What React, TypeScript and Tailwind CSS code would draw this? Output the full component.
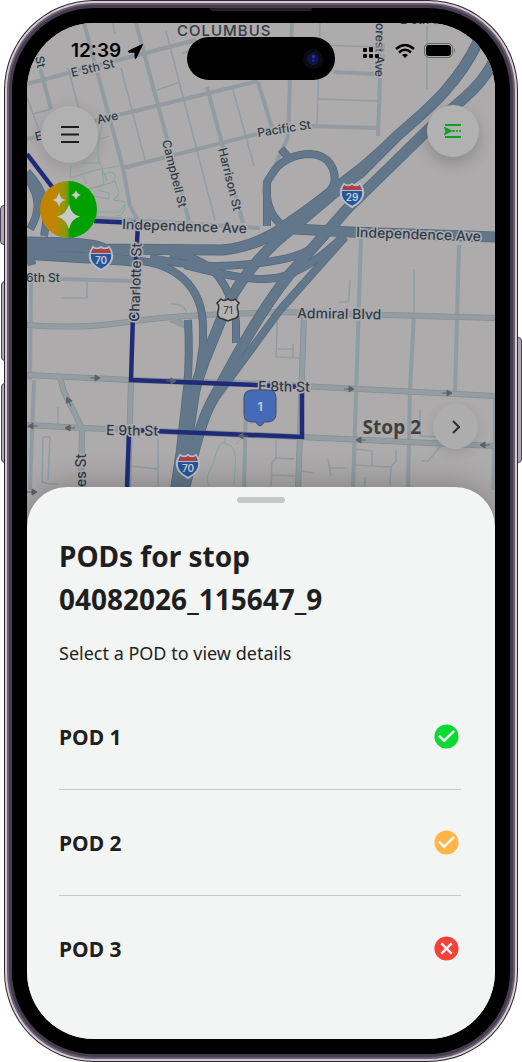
import type { ReactNode } from 'react'
import { MdCancel, MdCheckCircle } from 'react-icons/md'

const pods = [
  { name: 'POD 1', status: 'Delivered', Icon: MdCheckCircle, color: 'text-[#0bd934]' },
  { name: 'POD 2', status: 'Pending', Icon: MdCheckCircle, color: 'text-[#ffb547]' },
  { name: 'POD 3', status: 'Failed', Icon: MdCancel, color: 'text-[#f44336]' },
]

const alleys = [
  // north west blocks
  'M27 97 L33 114 L40 133', 'M33 114 L51 109', 'M68 68 L79 109', 'M113 23 L115 34', 'M121 68 L145 160', 'M166 31 L215 220',
  'M157 90 L178 83', 'M182 53 L193 50', 'M232 86 L254 166', 'M427 23 V89',
  'M320 23 L317 126', 'M318 45 L378 47', 'M318 99 L377 101', 'M190 23 L191 28',
  // east side
  'M339 302 H346 Q349 302 349 298 L350 280', 'M414 269 V315',
  'M277 319 V330 L276 357 L299 358', 'M278 349 H293 M293 344 V357',
  'M420 410 V436 L441 437', 'M440 447 L428 461 H421', 'M328 459 L331 476 M330 468 H346',
  'M354 449 L372 451 V465 M354 465 L391 467 L396 461 V450 M391 466 L390 485 M365 477 V488',
  'M276 440 V458 L272 463 L271 486 M275 458 L295 459 M272 475 L295 476 M301 471 L314 473',
  // west side
  'M61 298 H87 V282', 'M58 407 V424', 'M50 437 H43 L42 482 L50 484 H58 M50 437 L48 480', 'M131 466 L157 469 M158 435 V487', 'M171 304 Q186 304 186 313',
]

const streets = [
  'M27 84 L68 73 L196 40', 'M27 139 L118 115 L160 105 L258 81', 'M123 168 L257 134',
  'M36 52 L51 109', 'M84 23 L123 168 L130 206 L137 219', 'M136 23 L189 221', 'M207 87 L243 223', 'M258 82 L272 128',
  'M292 23 L288 137 L272 172', 'M310 126 L378 128', 'M379 23 V60', 'M380 78 L378 136', 'M333 72 L376 74',
  'M60 279 L133 281', 'M96 218 L130 220 L260 228', 'M31 280 L30 380', 'M34 380 L30 490',
  'M361 238 L353 490', 'M459 245 L455 394', 'M414 314 L410 390 L408 490', 'M495 395 V434 L493 490', 'M246 405 L244 490',
]

const avenues = [
  'M27 325 Q80 329 120 323 T205 315 L280 312 L496 318', 'M27 375 L131 380 L263 384 L496 396', 'M27 425 L82 428 L133 430 L300 437 L496 446',
  'M131 380 L128 490', 'M60 377 L64 392 L82 428 L81 490', 'M304 316 L298 490', 'M171 319 L187 326',
]

const ramps = [
  'M27 178 C42 198 39 214 30 229', 'M27 172 C44 190 50 209 44 236',
  'M281 149 L288 157', 'M267 226 V182 L272 174 C279 162 293 154 311 154 C329 155 337 170 334 184 C328 200 300 216 284 227',
  'M267 182 Q264 214 285 227', 'M27 248 L132 249 H220 C250 249 268 240 277 232 L362 166 L396 136',
  'M125 260 C175 260 204 286 203 330 V345 L182 487', 'M150 258 C190 266 220 269 267 262 S311 246 326 236',
  'M170 254 C195 255 211 267 218 276 S233 298 236 322 V343', 'M185 265 C236 278 267 284 290 274 S325 253 343 237',
  'M188 320 Q190 356 187 388 L180 450 L174 490', 'M345 237 L280 310 L211 404', 'M35 260 L27 262',
]

const mainlines = [
  'M27 242 C70 243 96 243 104 249 L222 250 Q249 248 276 232 L360 173 L396 137 C420 115 455 90 478 42',
  'M27 254 C60 257 105 258 134 261', 'M496 237 L350 232 L276 228', 'M494 60 C482 86 462 100 436 122 L347 209 L289 275 C257 315 228 371 211 403 C200 423 192 460 184 490',
  'M370 163 L277 241 Q240 275 223 315 L204 362 Q190 400 186 430 L176 490',
]

const parkPaths =
  'M102 124 C100 140 94 152 102 168 L107 181 M99 139 L110 136 M82 163 H99 L98 158 M71 166 L70 178 L96 170 L119 166 M72 180 L76 192 L98 187 L116 181 M84 176 L86 184 M102 170 L104 184 L83 191 M105 174 C113 170 117 174 114 180 L118 189 Q121 196 113 200 L126 202 M98 190 L109 193 V199 L93 196 M96 212 H120 L125 204 Q125 216 116 216 M225 438 V444 C238 445 235 460 235 471 L234 485 M225 441 C215 446 216 459 212 466 Q204 479 209 486 M235 445 L243 437'

const routes = ['M27 154 L53 188', 'M94 221 L135 223 L138 224 L133 315 L131 380 L302 387 V437 L129 430 L127 490']

function Label({ x, y, size = 12, turn = 0, children }: { x: number; y: number; size?: number; turn?: number; children: ReactNode }) {
  return (
    <text
      x={x}
      y={y}
      fontSize={size}
      transform={`rotate(${turn} ${x} ${y})`}
      className="fill-[#2e3b4b] stroke-[#adabac] font-medium"
      strokeWidth="3"
      paintOrder="stroke"
    >
      {children}
    </text>
  )
}

function Interstate({ x, y, num }: { x: number; y: number; num: string }) {
  return (
    <g transform={`translate(${x} ${y})`}>
      <path d="M-8 -11 Q-4 -8 0 -11 Q4 -8 8 -11 Q14 -3 9 5 Q6 9 0 12 Q-6 9 -9 5 Q-14 -3 -8 -11Z" fill="#24579c" stroke="#b9bcc3" strokeWidth="2" />
      <path d="M-9 -5 L-8 -10 Q-4 -7 0 -10 Q4 -7 8 -10 L9 -5Z" fill="#b23f40" />
      <path d="M-10 -4.500H10" stroke="#b9bcc3" />
      <text y="6" fontSize="10" textAnchor="middle" className="fill-[#c8ccd2] font-semibold">{num}</text>
    </g>
  )
}

function Arrow({ x, y, turn = 0 }: { x: number; y: number; turn?: number }) {
  return <path d="M-5 0H1M0 -3L5 0L0 3Z" transform={`translate(${x} ${y}) rotate(${turn})`} fill="#596269" stroke="#596269" />
}

function StreetMap() {
  return (
    <svg
      viewBox="27 23 468 500"
      preserveAspectRatio="xMidYMin slice"
      className="absolute inset-0 size-full bg-[#adabac] font-['Inter',sans-serif]"
      role="img"
      aria-label="Route map"
    >
      <g fill="none" strokeLinejoin="round">
        <g stroke="#929ca2" strokeWidth="1.500">{alleys.map((d) => <path key={d} d={d} />)}</g>
        <path d={parkPaths} stroke="#83a898" />
        <g stroke="#929b9f" strokeWidth="4">{streets.map((d) => <path key={d} d={d} />)}</g>
        <g stroke="#858f95" strokeWidth="6">{avenues.map((d) => <path key={d} d={d} />)}</g>
        <g stroke="#949da1" strokeWidth="4.500">{avenues.map((d) => <path key={d} d={d} />)}</g>
        <g stroke="#536980" strokeWidth="8">{ramps.map((d) => <path key={d} d={d} />)}</g>
        <g stroke="#536980" strokeWidth="11">{mainlines.map((d) => <path key={d} d={d} />)}</g>
        <g stroke="#63778b" strokeWidth="6.500">{ramps.map((d) => <path key={d} d={d} />)}</g>
        <g stroke="#63778b" strokeWidth="9.500">{mainlines.map((d) => <path key={d} d={d} />)}</g>
        <g stroke="#202b78" strokeWidth="4.500" strokeLinejoin="miter">{routes.map((d) => <path key={d} d={d} />)}</g>
      </g>

      <Arrow x={95} y={378} />
      <Arrow x={171} y={381} />
      <Arrow x={349} y={389} />
      <Arrow x={447} y={393} />
      <Arrow x={69} y={402} turn={-115} />
      <Arrow x={33} y={426} turn={180} />
      <Arrow x={70} y={428} turn={180} />
      <Arrow x={243} y={436} turn={180} />
      <Arrow x={361} y={440} turn={180} />
      <Arrow x={485} y={445} turn={180} />
      <Arrow x={32} y={492} />

      <text x="177" y="36" fontSize="15" letterSpacing="1" className="fill-[#333b43] font-medium">COLUMBUS</text>
      <Label x={35} y={57} turn={78}>St</Label>
      <Label x={72} y={77} turn={-13}>E 5th St</Label>
      <Label x={36} y={141} turn={-13}>E</Label>
      <Label x={98} y={124} turn={-13}>Ave</Label>
      <Label x={400} y={24}>E 5th St</Label>
      <Label x={376} y={23} turn={91}>orest Ave</Label>
      <Label x={258} y={137} turn={-9}>Pacific St</Label>
      <Label x={162} y={141} turn={76}>Campbell St</Label>
      <Label x={218} y={149} turn={76}>Harrison St</Label>
      <Label x={122} y={229} size={14} turn={2}>Independence Ave</Label>
      <Label x={356} y={237} size={14} turn={2}>Independence Ave</Label>
      <Label x={139} y={322} size={14} turn={-88}>Charlotte St</Label>
      <Label x={26} y={282}>6th St</Label>
      <Label x={297} y={318} size={14} turn={1}>Admiral Blvd</Label>
      <Label x={258} y={391} size={14} turn={1}>E 8th St</Label>
      <Label x={106} y={435} size={14} turn={1}>E 9th St</Label>
      <Label x={86} y={487} size={14} turn={-90}>es St</Label>

      <Interstate x={352} y={195} num="29" />
      <Interstate x={101} y={258} num="70" />
      <Interstate x={188} y={466} num="70" />
      <g transform="translate(228 310)">
        <path d="M-7 -11 Q-4 -8 0 -11 Q4 -8 7 -11 L11 -7 Q8 -4 10 1 Q12 8 5 9 L0 11 L-5 9 Q-12 8 -10 1 Q-8 -4 -11 -7Z" fill="#b4b2b2" stroke="#333" strokeWidth="1.500" />
        <text y="4" fontSize="10" textAnchor="middle" className="fill-[#333]">71</text>
      </g>

      <path d="M252 390H268Q276 390 276 398V414Q276 421 268 422L264 422Q263 425 260 426Q257 425 256 422H252Q244 422 244 414V398Q244 390 252 390Z" fill="#446ab8" stroke="#45505e" />
      <text x="260" y="411" fontSize="12" textAnchor="middle" className="fill-[#b8c4da] font-bold">1</text>
    </svg>
  )
}

function StatusBar() {
  return (
    <div className="absolute inset-x-0 top-0 flex h-14 items-center justify-between pl-11 pr-[39px] text-black">
      <div className="flex items-center gap-[6px]">
        <span className="font-['Inter',sans-serif] text-[19px] font-semibold leading-6">12:39</span>
        <svg viewBox="0 0 17 17" className="size-[17px]" aria-hidden="true">
          <path d="M15.500 1.500 L1.500 8 Q1 9 2 9.200 H8 V15.200 Q8.400 16 9 15.200Z" fill="currentColor" stroke="currentColor" strokeLinejoin="round" />
        </svg>
      </div>
      <div className="flex items-center gap-[9px]">
        <svg viewBox="0 0 24 18" className="h-[18px] w-6" aria-hidden="true">
          <path d="M13 1h4v9h-4zM19 1h4v9h-4zM19 12h4v4h-4z" fill="#9a9999" opacity="0.6" />
          <g fill="currentColor">
            <rect x="1" y="6" width="4" height="4" rx="1" />
            <rect x="7" y="5" width="4" height="5" rx="1" />
            <rect x="1" y="12" width="4" height="4" rx="1" />
            <rect x="7" y="12" width="4" height="4" rx="1" />
            <rect x="13" y="12" width="4" height="4" rx="1" />
          </g>
        </svg>
        <svg viewBox="0 0 20 15" className="h-[15px] w-5" fill="none" stroke="currentColor" aria-hidden="true">
          <path d="M1 5Q10 -3 19 5M4 8.500Q10 3 16 8.500" strokeWidth="2.500" />
          <path d="M7 11Q10 8.500 13 11L10 14Z" fill="currentColor" stroke="none" />
        </svg>
        <svg viewBox="0 0 32 16" className="h-4 w-8" aria-hidden="true">
          <rect x="0.500" y="0.500" width="28" height="14" rx="4.500" fill="none" stroke="#666" />
          <rect x="2" y="2" width="25" height="11" rx="3" />
          <path d="M30 5Q32 7.500 30 10Z" fill="#666" />
        </svg>
      </div>
    </div>
  )
}

function DynamicIsland() {
  return (
    <div className="absolute left-1/2 top-[14px] flex h-[43px] w-[148px] -translate-x-1/2 items-center justify-end rounded-full bg-black pr-3">
      <span className="flex size-5 items-center justify-center rounded-full bg-[#0c0a14]">
        <span className="flex size-3 flex-col items-center justify-center gap-px rounded-full bg-[#14144a]">
          <span className="size-[3px] rounded-full bg-[#2b3dae]" />
          <span className="size-[3px] rounded-full bg-[#1c2a86]" />
        </span>
      </span>
    </div>
  )
}

export default function App() {
  return (
    <main className="relative mx-auto flex min-h-screen max-w-[522px] bg-white px-1 font-['Noto_Sans',sans-serif] text-[#1f1f1f]">
      {/* side buttons */}
      <span className="absolute left-0 top-[205px] h-10 w-2 rounded-l-sm border border-[#4a4355] bg-[#b0a8b6]" />
      <span className="absolute left-px top-[281px] h-20 w-2 rounded-l-sm border border-[#4a4355] bg-[#b0a8b6]" />
      <span className="absolute left-px top-[383px] h-20 w-2 rounded-l-sm border border-[#4a4355] bg-[#b0a8b6]" />
      <span className="absolute right-0 top-[337px] h-[126px] w-2 rounded-r-sm border border-[#4a4355] bg-[#b0a8b6]" />

      <div className="relative flex w-full rounded-[90px] bg-[#2c2634] p-px">
        <div className="flex w-full rounded-[89px] bg-[#d6cdd0] p-[2px]">
          <div className="flex w-full rounded-[87px] border-2 border-[#675b70] bg-[#453c4e] p-[3px]">
            <div className="relative flex w-full rounded-[82px] bg-black p-[15px]">
              <span className="absolute left-1/2 top-0 h-[3px] w-[102px] -translate-x-1/2 rounded-b bg-[#222]" />
              <div className="flex w-full flex-col overflow-hidden rounded-[67px] bg-[#adabac]">
                <section className="relative h-[500px]">
                  <StreetMap />
                  <StatusBar />
                  <DynamicIsland />

                  <button
                    aria-label="Menu"
                    className="absolute left-[14px] top-[83px] flex size-[57px] items-center justify-center rounded-full bg-[#b1b1b1] shadow-[0_4px_16px_rgba(0,0,0,0.15)]"
                  >
                    <svg viewBox="0 0 18 17" className="h-[17px] w-[18px]" stroke="#1c1c1c" strokeWidth="2" aria-hidden="true">
                      <path d="M0 1H18M0 8.500H18M0 16H18" />
                    </svg>
                  </button>

                  <button
                    aria-label="Route list"
                    className="absolute right-4 top-[82px] flex size-[52px] items-center justify-center rounded-full bg-[#b1b1b1] shadow-[0_6px_16px_rgba(0,0,0,0.2)]"
                  >
                    <svg viewBox="0 0 18 16" className="h-4 w-[18px]" stroke="#0c9f20" strokeWidth="2" aria-hidden="true">
                      <path d="M1 2H17M1 14H17" />
                      <path d="M8 8H11M12 8H14M15 8H17" strokeWidth="1.500" />
                      <path d="M1.500 5.500L6.500 8L1.500 10.500L2.500 8Z" fill="#0c9f20" />
                    </svg>
                  </button>

                  <button
                    aria-label="Assistant"
                    className="absolute left-[13px] top-[158px] size-[57px] rounded-full bg-linear-to-r from-[#c08400] from-25% via-[#8b980a] via-45% to-[#00a000] to-52%"
                  >
                    <svg viewBox="0 0 57 57" className="size-full" fill="#c9c9c9" aria-hidden="true">
                      <path d="M29 23Q31 34 40 35.500Q31 38 29 48Q26 38 17 35.500Q26 34 29 23Z" />
                      <path d="M19 11Q20 18 26 19Q20 20 19 26Q18 20 12 19Q18 18 19 11Z" />
                      <path d="M36 9Q37 13 41 14Q37 15 36 19Q35 15 31 14Q35 13 36 9Z" />
                    </svg>
                  </button>

                  <div className="absolute right-[17px] top-[381px] flex items-center gap-3">
                    <span className="text-[19px] font-bold leading-6 text-[#3f3f3f]">Stop 2</span>
                    <button
                      aria-label="Next stop"
                      className="flex size-[45px] items-center justify-center rounded-full bg-[#adadad] shadow-[0_4px_12px_rgba(0,0,0,0.12)]"
                    >
                      <svg viewBox="0 0 8 14" className="h-[14px] w-2" fill="none" stroke="#2e2e2e" strokeWidth="2" aria-hidden="true">
                        <path d="M1 1L7 7L1 13" />
                      </svg>
                    </button>
                  </div>
                </section>

                <section className="relative -mt-9 flex-1 rounded-t-[40px] bg-[#f3f5f4] pl-8 pr-[34px] pt-12 shadow-[0_0_32px_rgba(0,0,0,0.3)]">
                  <span className="absolute left-1/2 top-[10px] h-[6px] w-12 -translate-x-1/2 rounded-full bg-[#c5c7c6]" />
                  <h1 className="text-[28px] font-bold leading-[43px]">
                    PODs for stop
                    <br />
                    04082026_115647_9
                  </h1>
                  <p className="mt-[18px] text-[18px] leading-7">Select a POD to view details</p>
                  <ul className="mt-[17px] divide-y divide-[#c9cbca]">
                    {pods.map(({ name, status, Icon, color }) => (
                      <li key={name}>
                        <button className="flex h-[105px] w-full items-center justify-between">
                          <span className="text-[21px] font-bold leading-7">{name}</span>
                          <Icon className={`size-[29px] ${color}`} title={status} />
                        </button>
                      </li>
                    ))}
                  </ul>
                </section>
              </div>
            </div>
          </div>
        </div>
      </div>
    </main>
  )
}
